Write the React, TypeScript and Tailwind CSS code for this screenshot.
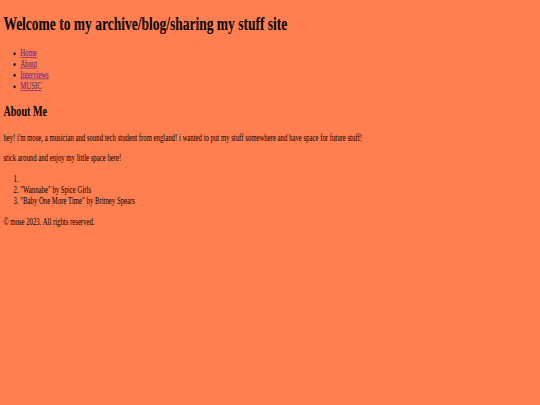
const navLinks = ["Home", "About", "Interviews", "MUSIC"];

const songs = ["", "\"Wannabe\" by Spice Girls", "\"Baby One More Time\" by Britney Spears"];

export default function App() {
  return (
    <div className="w-[540px] h-[405px] overflow-hidden bg-[#ff7f50]">
      {/* page laid out at 1280x675, then squeezed into the window */}
      <div className="flow-root w-[1280px] h-[675px] origin-top-left scale-x-[0.421875] scale-y-[0.6] px-2 font-['Liberation_Serif',serif] text-[16px] leading-[1.15] text-black">
        <h1 className="mt-[21.44px] mb-[21.44px] text-[32px] font-bold">
          Welcome to my archive/blog/sharing my stuff site
        </h1>
        <nav>
          <ul className="my-4 list-disc pl-10">
            {navLinks.map(link => (
              <li key={link}>
                <a href="#" className="text-[#551a8b] underline">
                  {link}
                </a>
              </li>
            ))}
          </ul>
        </nav>
        <section>
          <h2 className="my-[19.92px] text-[24px] font-bold">About Me</h2>
          <p className="my-4">
            hey! i'm mose, a musician and sound tech student from england! i wanted to put my stuff somewhere and
            have space for future stuff!
          </p>
          <p className="my-4">stick around and enjoy my little space here!</p>
          <ol className="my-4 list-decimal pl-10">
            {songs.map((song, i) => (
              <li key={i}>{song}</li>
            ))}
          </ol>
        </section>
        <footer>
          <p className="my-4">© mose 2023. All rights reserved.</p>
        </footer>
      </div>
    </div>
  );
}
